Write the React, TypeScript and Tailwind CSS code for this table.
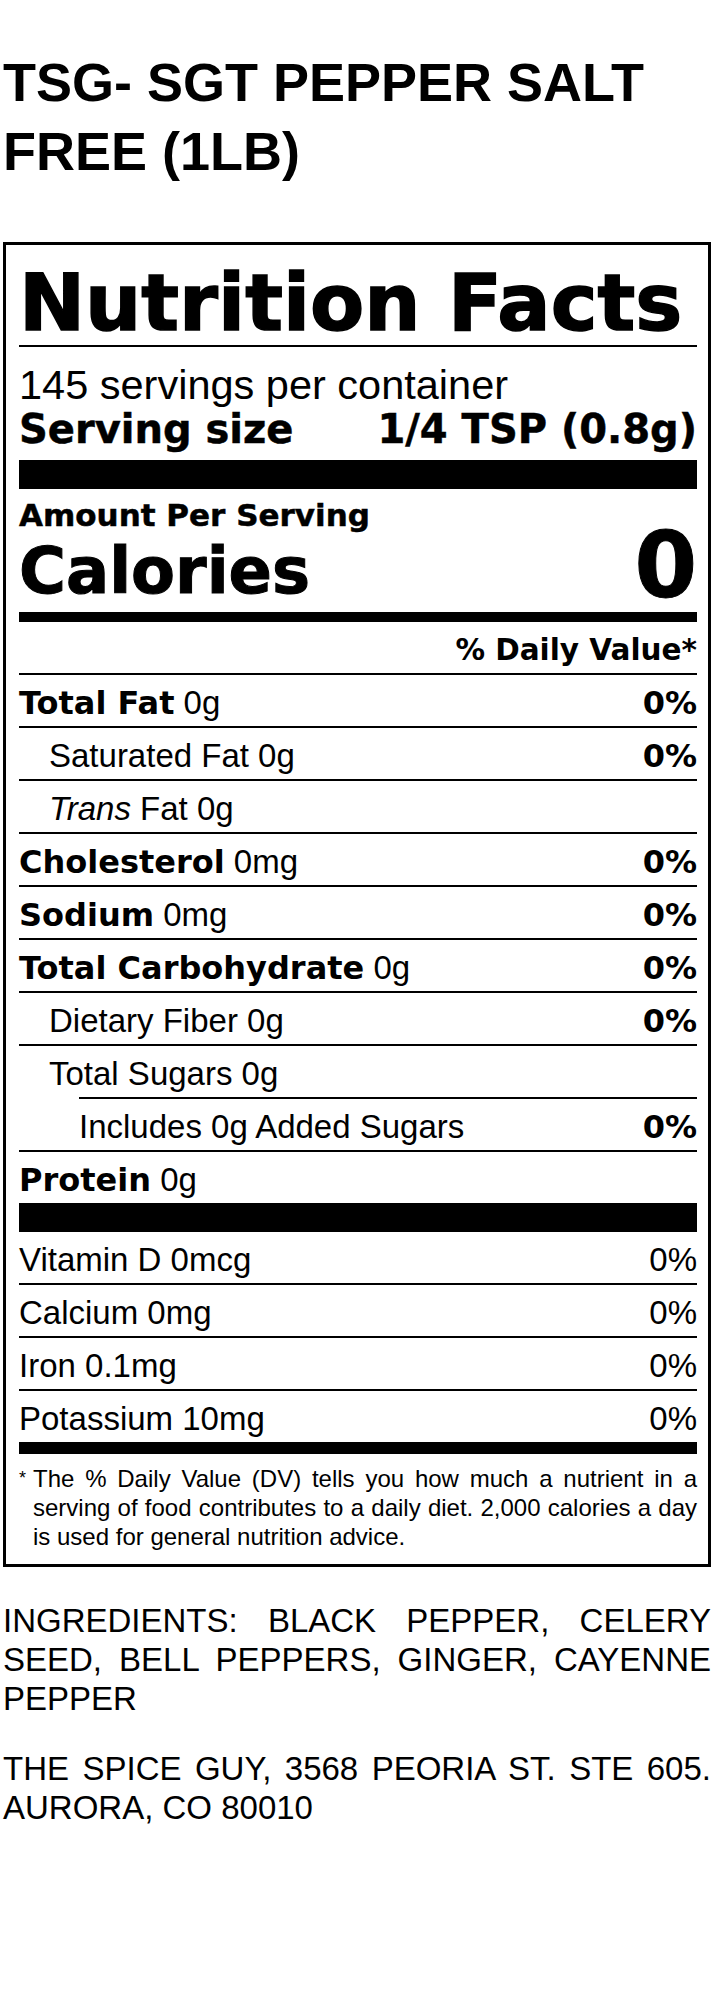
import React from "react";

// heavy label face (close to Helvetica Black widths)
const heavy = "font-['DejaVu_Sans',sans-serif] font-bold";

type RowProps = {
  children: React.ReactNode;
  dv?: string;
  dvBold?: boolean;
  indent?: "none" | "one" | "two";
};

function Row({ children, dv, dvBold = true, indent = "none" }: RowProps) {
  const pad =
    indent === "two" ? "pl-[60px]" : indent === "one" ? "pl-[30px]" : "";
  return (
    <div className="flex h-[51px] items-baseline justify-between pt-[4px] text-[33px] leading-[47px]">
      <span className={pad}>{children}</span>
      {dv && <span className={dvBold ? `${heavy} text-[32px]` : ""}>{dv}</span>}
    </div>
  );
}

function Rule() {
  return <div className="h-[2px] bg-black" />;
}

export default function App() {
  return (
    <div className="min-h-[2006px] bg-white pl-[3px] pr-[9px] font-['Liberation_Sans',Arial,sans-serif] text-black">
      {/* Product title */}
      <h1 className="pt-[48px] text-[54px] font-bold leading-[69px]">
        TSG- SGT PEPPER SALT
        <br />
        FREE (1LB)
      </h1>

      {/* Nutrition Facts panel */}
      <div className="mt-[56px] border-[3px] border-black px-[13px] pr-[11px] pb-[13px]">
        <div
          className={`${heavy} mt-[19px] text-[79px] leading-[78px] [-webkit-text-stroke:1.5px_black]`}
        >
          Nutrition Facts
        </div>
        <div className="mt-[3px] h-[2px] bg-black" />

        <div className="mt-[15px] text-[41.5px] leading-[45px]">
          145 servings per container
        </div>
        <div
          className={`${heavy} flex justify-between text-[40px] leading-[44px] [-webkit-text-stroke:0.5px_black]`}
        >
          <span>Serving size</span>
          <span>1/4 TSP (0.8g)</span>
        </div>
        <div className="mt-[9px] h-[29px] bg-black" />

        <div
          className={`${heavy} mt-[10px] text-[31px] leading-[33px] [-webkit-text-stroke:0.5px_black]`}
        >
          Amount Per Serving
        </div>
        <div
          className={`${heavy} flex items-end justify-between [-webkit-text-stroke:1px_black]`}
        >
          <span className="text-[64px] leading-[58px]">Calories</span>
          <span className="text-[90px] leading-[68px]">0</span>
        </div>
        <div className="mt-[12px] h-[10px] bg-black" />

        <div
          className={`${heavy} mt-[12px] text-right text-[29.5px] leading-[33px]`}
        >
          % Daily Value*
        </div>
        <div className="mt-[6px] h-[2px] bg-black" />

        <Row dv="0%">
          <b className={`${heavy} text-[32px]`}>Total Fat</b> 0g
        </Row>
        <Rule />
        <Row dv="0%" indent="one">
          Saturated Fat 0g
        </Row>
        <Rule />
        <Row indent="one">
          <i>Trans</i> Fat 0g
        </Row>
        <Rule />
        <Row dv="0%">
          <b className={`${heavy} text-[32px]`}>Cholesterol</b> 0mg
        </Row>
        <Rule />
        <Row dv="0%">
          <b className={`${heavy} text-[32px]`}>Sodium</b> 0mg
        </Row>
        <Rule />
        <Row dv="0%">
          <b className={`${heavy} text-[32px]`}>Total Carbohydrate</b> 0g
        </Row>
        <Rule />
        <Row dv="0%" indent="one">
          Dietary Fiber 0g
        </Row>
        <Rule />
        <Row indent="one">Total Sugars 0g</Row>
        <div className="ml-[60px] h-[2px] bg-black" />
        <Row dv="0%" indent="two">
          Includes 0g Added Sugars
        </Row>
        <Rule />
        <Row>
          <b className={`${heavy} text-[32px]`}>Protein</b> 0g
        </Row>
        <div className="h-[29px] bg-black" />

        <Row dv="0%" dvBold={false}>
          Vitamin D 0mcg
        </Row>
        <Rule />
        <Row dv="0%" dvBold={false}>
          Calcium 0mg
        </Row>
        <Rule />
        <Row dv="0%" dvBold={false}>
          Iron 0.1mg
        </Row>
        <Rule />
        <Row dv="0%" dvBold={false}>
          Potassium 10mg
        </Row>
        <div className="h-[12px] bg-black" />

        {/* footnote with hanging asterisk */}
        <p className="relative mt-[10px] pl-[14px] text-justify text-[24px] leading-[29px]">
          <span className="absolute left-0 top-0 text-[18px]">*</span>
          The % Daily Value (DV) tells you how much a nutrient in a serving of
          food contributes to a daily diet. 2,000 calories a day is used for
          general nutrition advice.
        </p>
      </div>

      <p className="mt-[34px] text-justify text-[33px] leading-[39px]">
        INGREDIENTS: BLACK PEPPER, CELERY SEED, BELL PEPPERS, GINGER, CAYENNE
        PEPPER
      </p>
      <p className="mt-[31px] text-justify text-[33px] leading-[39px]">
        THE SPICE GUY, 3568 PEORIA ST. STE 605. AURORA, CO 80010
      </p>
    </div>
  );
}
